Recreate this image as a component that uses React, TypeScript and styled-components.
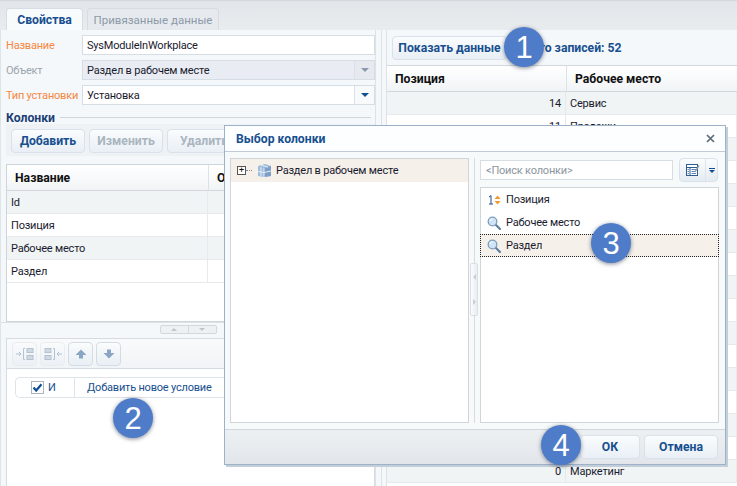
import React, { FC } from 'react'
import styled, { createGlobalStyle } from 'styled-components'

const GlobalStyle = createGlobalStyle`
    html, body {
        margin: 0;
        padding: 0;
        background: #fff;
    }
    body {
        font-family: Roboto, "Noto Sans", sans-serif;
        font-size: 11px;
        letter-spacing: -0.2px;
        color: #1a1a2e;
    }
`

const Page = styled.div`
    position: relative;
    width: 737px;
    height: 486px;
    overflow: hidden;
    background: #f5f8fa;
`

const TabStrip = styled.div`
    display: flex;
    align-items: flex-end;
    gap: 4px;
    height: 29px;
    padding-left: 6px;
    border-top: 1px solid #d3d8dd;
    background: linear-gradient(#e2e5e9, #e9ecef);
`

const Tab = styled.div<{ $active?: boolean }>`
    display: flex;
    align-items: center;
    justify-content: center;
    height: 22px;
    width: ${p => (p.$active ? 77 : 132)}px;
    box-sizing: border-box;
    border: 1px solid #d6dce2;
    border-bottom: 0;
    border-radius: 4px 4px 0 0;
    background: ${p => (p.$active ? '#f8fbfc' : '#e6eaee')};
    color: ${p => (p.$active ? '#174f8f' : '#8c99a8')};
    font-weight: ${p => (p.$active ? 700 : 400)};
    font-size: ${p => (p.$active ? 12.2 : 11.5)}px;
    letter-spacing: 0;
`

const Columns = styled.div`
    display: flex;
    height: 456px;
`

const LeftSide = styled.div`
    width: 376px;
    box-sizing: border-box;
    padding: 5px 0 0 5px;
    border-left: 1px solid #dfe4e8;
    border-right: 1px solid #dde2e6;
    display: flex;
    flex-direction: column;
`

const FormRow = styled.div`
    display: flex;
    align-items: center;
    height: 20px;
    margin-bottom: 5px;
`

const FormLabel = styled.div<{ $muted?: boolean }>`
    width: 76px;
    flex: none;
    white-space: nowrap;
    color: ${p => (p.$muted ? '#9aa5ae' : '#f6863f')};
`

const Field = styled.div<{ $disabled?: boolean }>`
    display: flex;
    align-items: center;
    justify-content: space-between;
    width: 293px;
    height: 20px;
    box-sizing: border-box;
    padding-left: 4px;
    border: 1px solid #d5dde5;
    background: ${p => (p.$disabled ? '#e9edf3' : '#fff')};
    color: #1a1a2e;
`

const FieldArrow = styled.div<{ $disabled?: boolean }>`
    display: flex;
    align-items: center;
    justify-content: center;
    width: 19px;
    height: 18px;
    border-left: 1px solid #dbe1e7;
    background: ${p => (p.$disabled ? '#e6eaef' : '#f7f9fb')};
    color: ${p => (p.$disabled ? '#8a9aac' : '#104f96')};
`

const Arrow = styled.div`
    width: 0;
    height: 0;
    border-left: 4px solid transparent;
    border-right: 4px solid transparent;
    border-top: 4px solid currentColor;
`

const SectionHead = styled.div`
    display: flex;
    align-items: center;
    gap: 5px;
    height: 13px;
    margin-top: 1px;
    color: #1c4076;
    font-size: 12.2px;
    font-weight: 700;
    letter-spacing: 0;
    &::after {
        content: '';
        flex: 1;
        margin-right: 4px;
        height: 1px;
        background: #cfd6dc;
    }
`

const ButtonBar = styled.div`
    display: flex;
    gap: 4px;
    height: 32px;
    box-sizing: border-box;
    padding: 5px 5px 3px;
    width: 369px;
    background: #eef2f5;
`

const Button = styled.div<{ $disabled?: boolean; $w?: number }>`
    display: flex;
    align-items: center;
    justify-content: center;
    width: ${p => p.$w ?? 74}px;
    height: 24px;
    flex: none;
    box-sizing: border-box;
    border: 1px solid #d9e2ea;
    border-radius: 4px;
    background: linear-gradient(#fafcfd, #e9eff5);
    color: ${p => (p.$disabled ? '#aab5c0' : '#174f8f')};
    font-size: 12.2px;
    font-weight: 700;
    letter-spacing: 0;
    white-space: nowrap;
`

const GridFrame = styled.div`
    width: 369px;
    height: 158px;
    margin-top: 8px;
    box-sizing: border-box;
    border: 1px solid #cdd5db;
    background: #fff;
    overflow: hidden;
`

const HeadRow = styled.div`
    display: flex;
    height: 25px;
    border-bottom: 1px solid #d2d8dd;
    background: linear-gradient(#fff, #f1f4f6);
    color: #111;
    font-size: 12.2px;
    font-weight: 700;
    letter-spacing: 0;
`

const HeadCell = styled.div<{ $w: number }>`
    display: flex;
    align-items: center;
    width: ${p => p.$w}px;
    flex: none;
    box-sizing: border-box;
    padding-left: 8px;
    white-space: nowrap;
    & + & {
        border-left: 1px solid #dde2e6;
    }
`

const DataRow = styled.div<{ $shaded?: boolean }>`
    display: flex;
    align-items: center;
    height: 22px;
    border-bottom: 1px solid #e7eaec;
    background: ${p => (p.$shaded ? '#f0f4f5' : '#fff')};
`

const DataCell = styled.div<{ $w: number; $right?: boolean }>`
    width: ${p => p.$w}px;
    flex: none;
    height: 100%;
    display: flex;
    align-items: center;
    box-sizing: border-box;
    padding: 1px 4px 0;
    white-space: nowrap;
    justify-content: ${p => (p.$right ? 'flex-end' : 'flex-start')};
    border-right: 1px solid #e7eaec;
`

const HSplit = styled.div`
    display: flex;
    justify-content: center;
    align-items: center;
    width: 369px;
    height: 16px;
    margin-left: -5px;
    padding-left: 5px;
    border-top: 1px solid #dde2e6;
    box-sizing: border-box;
`

const SplitButtons = styled.div`
    display: flex;
    margin-top: -3px;
    border: 1px solid #d2d8dd;
    border-radius: 2px;
    color: #bcc5cd;
    background: #eef1f4;
    & > div {
        display: flex;
        align-items: center;
        justify-content: center;
        width: 27px;
        height: 7px;
    }
    & > div + div {
        border-left: 1px solid #d2d8dd;
    }
`

const SmallUp = styled.div`
    &::before {
        content: '';
        border-left: 3px solid transparent;
        border-right: 3px solid transparent;
        border-bottom: 3px solid currentColor;
    }
`

const SmallDown = styled.div`
    &::before {
        content: '';
        border-left: 3px solid transparent;
        border-right: 3px solid transparent;
        border-top: 3px solid currentColor;
    }
`

const FilterPanel = styled.div`
    flex: 1;
    width: 369px;
    box-sizing: border-box;
    border: 1px solid #d5dbe0;
    border-bottom: 0;
    background: #fff;
`

const FilterBar = styled.div`
    display: flex;
    gap: 3px;
    height: 30px;
    box-sizing: border-box;
    padding: 3px 5px;
    border-bottom: 1px solid #d5dbe0;
    background: linear-gradient(#f9fafb, #f1f4f6);
`

const IconButton = styled.div<{ $disabled?: boolean }>`
    display: flex;
    align-items: center;
    justify-content: center;
    width: 25px;
    height: 24px;
    box-sizing: border-box;
    border: 1px solid ${p => (p.$disabled ? '#e2e7ec' : '#d3dce5')};
    border-radius: 4px;
    background: linear-gradient(#fafcfd, #e9eff5);
    opacity: ${p => (p.$disabled ? 0.6 : 1)};
`

const ConditionRow = styled.div`
    display: flex;
    align-items: center;
    height: 21px;
    box-sizing: border-box;
    margin: 8px 0 0 8px;
    border: 1px solid #dfe4e8;
    border-right: 0;
    border-radius: 5px 0 0 5px;
`

const GroupCell = styled.div`
    display: flex;
    align-items: center;
    gap: 4px;
    width: 59px;
    height: 100%;
    box-sizing: border-box;
    padding-left: 15px;
    border-right: 1px solid #dfe4e8;
    color: #174f8f;
`

const CheckBox = styled.div`
    display: flex;
    align-items: center;
    justify-content: center;
    width: 13px;
    height: 13px;
    box-sizing: border-box;
    border: 1px solid #a9b4c0;
    background: #fff;
`

const AddLink = styled.div`
    padding-left: 12px;
    color: #174f8f;
    white-space: nowrap;
`

const VSplit = styled.div`
    width: 11px;
    flex: none;
    position: relative;
    background: linear-gradient(
        to right,
        #f5f8fa 5px,
        #dde2e6 5px,
        #dde2e6 6px,
        #f5f8fa 6px
    );
    border-right: 1px solid #dde2e6;
    box-sizing: border-box;
`

const RightSide = styled.div`
    flex: 1;
    display: flex;
    flex-direction: column;
    min-width: 0;
`

const RightTools = styled.div`
    display: flex;
    align-items: center;
    gap: 12px;
    height: 35px;
    flex: none;
    box-sizing: border-box;
    padding: 0 5px;
    color: #174f8f;
    font-size: 12.2px;
    font-weight: 700;
    letter-spacing: 0;
    white-space: nowrap;
`

const RightGrid = styled.div`
    border-top: 1px solid #d2d8dd;
    background: #fff;
    flex: 1;
    overflow: hidden;
`

const Dialog = styled.div`
    position: absolute;
    left: 224px;
    top: 125px;
    width: 502px;
    height: 340px;
    box-sizing: border-box;
    border: 1px solid #9db1c9;
    box-shadow: 2px 2px 0 #c3ced9;
    background: #f6fafb;
    display: flex;
    flex-direction: column;
`

const DialogHead = styled.div`
    display: flex;
    align-items: center;
    justify-content: space-between;
    height: 25px;
    flex: none;
    padding: 0 10px 0 11px;
    border-bottom: 1px solid #bfccd8;
    background: #fdfeff;
    color: #174f8f;
    font-size: 12.2px;
    font-weight: 700;
    letter-spacing: 0;
`

const DialogBody = styled.div`
    flex: 1;
    display: flex;
    padding: 6px 6px 6px 5px;
    min-height: 0;
`

const TreePane = styled.div`
    width: 239px;
    flex: none;
    box-sizing: border-box;
    border: 1px solid #cfd5d9;
    background: #fff;
`

const TreeRow = styled.div`
    display: flex;
    align-items: center;
    height: 23px;
    padding-left: 6px;
    background: #f5f0ea;
`

const TreeToggle = styled.div`
    display: flex;
    align-items: center;
    justify-content: center;
    width: 9px;
    height: 9px;
    box-sizing: border-box;
    border: 1px solid #555;
    background: #fff;
    font-size: 9px;
    line-height: 1;
    color: #111;
`

const TreeDots = styled.div`
    width: 6px;
    margin: 0 5px 0 0;
    border-top: 1px dotted #888;
`

const TreeLabel = styled.div`
    margin-left: 4px;
    white-space: nowrap;
`

const PaneSplit = styled.div`
    width: 11px;
    flex: none;
    position: relative;
    background: linear-gradient(
        to right,
        transparent 5px,
        #d6dcdf 5px,
        #d6dcdf 6px,
        transparent 6px
    );
`

const PaneGrip = styled.div`
    position: absolute;
    left: 1px;
    top: 105px;
    width: 8px;
    height: 53px;
    box-sizing: border-box;
    border: 1px solid #d9dfe4;
    border-radius: 2px;
    background: linear-gradient(to right, #fbfcfd, #e9edf0);
    color: #c8ced3;
    display: flex;
    flex-direction: column;
    justify-content: space-around;
    align-items: center;
`

const GripTriangle = styled.div<{ $right?: boolean }>`
    width: 0;
    height: 0;
    border-top: 3px solid transparent;
    border-bottom: 3px solid transparent;
    ${p =>
        p.$right
            ? 'border-left: 3px solid currentColor;'
            : 'border-right: 3px solid currentColor;'}
`

const ColumnPane = styled.div`
    flex: 1;
    display: flex;
    flex-direction: column;
    min-width: 0;
`

const SearchRow = styled.div`
    display: flex;
    align-items: center;
    justify-content: space-between;
    height: 24px;
    margin-bottom: 5px;
    flex: none;
    padding-right: 1px;
`

const SearchInput = styled.div`
    width: 193px;
    height: 20px;
    box-sizing: border-box;
    padding-left: 5px;
    display: flex;
    align-items: center;
    border: 1px solid #d6dde3;
    background: #fff;
    color: #8c96a0;
`

const ViewButton = styled.div`
    display: flex;
    align-items: center;
    width: 39px;
    height: 24px;
    box-sizing: border-box;
    border: 1px solid #d9e2ea;
    border-radius: 4px;
    background: linear-gradient(#fafcfd, #e4ebf2);
    color: #104f96;
`

const ViewIcon = styled.div`
    display: flex;
    align-items: center;
    justify-content: center;
    width: 25px;
    height: 100%;
    border-right: 1px solid #dde4ea;
`

const ViewArrow = styled.div`
    flex: 1;
    display: flex;
    justify-content: center;
`

const TinyArrow = styled.div`
    width: 6px;
    border-top: 1px solid currentColor;
    padding-top: 1px;
    &::after {
        content: '';
        display: block;
        width: 0;
        height: 0;
        border-left: 3px solid transparent;
        border-right: 3px solid transparent;
        border-top: 3px solid currentColor;
    }
`

const ColumnList = styled.div`
    flex: 1;
    box-sizing: border-box;
    border: 1px solid #cfd5d9;
    background: #fff;
`

const ColumnRow = styled.div<{ $selected?: boolean }>`
    display: flex;
    align-items: center;
    gap: 5px;
    height: 23px;
    box-sizing: border-box;
    padding-left: 6px;
    ${p =>
        p.$selected
            ? 'background: #f5f0ea; border: 1px dotted #222; margin: 0 -1px; padding-left: 6px;'
            : ''}
`

const DialogFoot = styled.div`
    display: flex;
    justify-content: flex-end;
    align-items: center;
    gap: 4px;
    height: 35px;
    flex: none;
    box-sizing: border-box;
    padding: 0 7px 1px 0;
    border-top: 1px solid #cfd5d9;
    background: linear-gradient(#edf0f2, #e2e6eb);
`

const Badge = styled.div<{ $x: number; $y: number }>`
    position: absolute;
    left: ${p => p.$x - 20}px;
    top: ${p => p.$y - 20}px;
    width: 40px;
    height: 40px;
    border-radius: 50%;
    background: #4f7cc8;
    box-shadow: 0 1px 4px rgba(50, 60, 80, 0.6);
    color: #fff;
    display: flex;
    align-items: center;
    justify-content: center;
    font-family: "Liberation Sans", sans-serif;
    font-size: 31px;
    letter-spacing: 0;
    line-height: 1;
`

const Cube: FC = () => (
    <svg width="15" height="15" viewBox="0 0 15 15">
        <path d="M1 3 L8 1 L14 3 L14 13 L7 14 L1 13 Z" fill="#9fbcdc" />
        <path d="M7 5 L14 3 V13 L7 14 Z" fill="#7b9fc8" />
        <path d="M1 8.5 L7 9.5 L14 8 M4 2.2 L11 4.2 M7 5 V14 M4 4.4 V13" stroke="#e4edf6" fill="none" />
    </svg>
)

const Magnifier: FC = () => (
    <svg width="14" height="14" viewBox="0 0 14 14">
        <path d="M8 8 L13 13" stroke="#5f7f9f" strokeWidth="2.2" strokeLinecap="round" />
        <circle cx="5.5" cy="5.5" r="4.3" fill="#cfe4f6" stroke="#7e9dbb" strokeWidth="1.3" />
        <path d="M3 5 Q3.6 3 5.6 2.8" stroke="#fff" fill="none" />
    </svg>
)

const NumberIcon: FC = () => (
    <svg width="14" height="14" viewBox="0 0 14 14">
        <path d="M2 4 L4 2.6 V11 M2 11 H6" stroke="#1c4f92" fill="none" />
        <path d="M7.5 6 L10.5 2.5 L13.5 6 Z M7.5 8 H13.5 L10.5 11.5 Z" fill="#f59a2c" />
    </svg>
)

const BlockArrow: FC<{ down?: boolean }> = ({ down }) => (
    <svg width="12" height="10" viewBox="0 0 12 10">
        <path
            d={down ? 'M4 0.5 H8 V4 H11.5 L6 9.5 L0.5 4 H4 Z' : 'M4 9.5 H8 V6 H11.5 L6 0.5 L0.5 6 H4 Z'}
            fill="#8ba6c4"
        />
    </svg>
)

const IndentIcon: FC<{ flip?: boolean }> = ({ flip }) => (
    <svg width="20" height="14" viewBox="0 0 20 14">
        <g transform={flip ? 'translate(20 0) scale(-1 1)' : undefined} fill="none" stroke="#8ba0b5">
            <path d="M1 7 H6 M4 5 L6 7 L4 9" />
            <path d="M10 1.5 H8.5 V12.5 H10" />
            <rect x="12" y="1.5" width="6" height="4" fill="#b5c6d6" />
            <rect x="12" y="8.5" width="6" height="4" fill="#b5c6d6" />
        </g>
    </svg>
)

const ViewGlyph: FC = () => (
    <svg width="14" height="13" viewBox="0 0 14 13">
        <rect x="0.5" y="0.5" width="11" height="11" fill="#fff" stroke="#2f5c8f" />
        <path d="M0.5 3.5 H11.5 M4 3.5 V11.5" stroke="#2f5c8f" />
        <path d="M5.5 5.5 H10 M5.5 7.5 H10 M5.5 9.5 H10 M1.5 5.5 H3 M1.5 7.5 H3 M1.5 9.5 H3" stroke="#5f86b0" />
        <path d="M9 8 L13 1.5" stroke="#8a99a8" strokeWidth="1.4" />
    </svg>
)

const CloseGlyph: FC = () => (
    <svg width="9" height="9" viewBox="0 0 9 9">
        <path d="M1 1 L8 8 M8 1 L1 8" stroke="#5d6b78" strokeWidth="1.7" />
    </svg>
)

const CheckGlyph: FC = () => (
    <svg width="11" height="11" viewBox="0 0 11 11">
        <path d="M1.5 5.5 L4.2 8.5 L9.5 2.2" stroke="#104f96" strokeWidth="2.2" fill="none" />
    </svg>
)

const leftRows = ['Id', 'Позиция', 'Рабочее место', 'Раздел']

const rightRows: [number, string][] = [
    [14, 'Сервис'],
    [11, 'Продажи'],
    [10, 'Продажи'],
    [9, 'Продажи'],
    [8, 'Продажи'],
    [7, 'Продажи'],
    [6, 'Продажи'],
    [5, 'Продажи'],
    [4, 'Маркетинг'],
    [3, 'Маркетинг'],
    [2, 'Маркетинг'],
    [1, 'Маркетинг'],
    [0, 'Сервис'],
    [3, 'Сервис'],
    [2, 'Сервис'],
    [1, 'Сервис'],
    [0, 'Маркетинг'],
]

const App: FC = () => {
    return (
        <Page>
            <GlobalStyle />
            <TabStrip>
                <Tab $active>Свойства</Tab>
                <Tab>Привязанные данные</Tab>
            </TabStrip>
            <Columns>
                <LeftSide>
                    <FormRow>
                        <FormLabel>Название</FormLabel>
                        <Field>SysModuleInWorkplace</Field>
                    </FormRow>
                    <FormRow>
                        <FormLabel $muted>Объект</FormLabel>
                        <Field $disabled>
                            Раздел в рабочем месте
                            <FieldArrow $disabled>
                                <Arrow />
                            </FieldArrow>
                        </Field>
                    </FormRow>
                    <FormRow>
                        <FormLabel>Тип установки</FormLabel>
                        <Field>
                            Установка
                            <FieldArrow>
                                <Arrow />
                            </FieldArrow>
                        </Field>
                    </FormRow>
                    <SectionHead>Колонки</SectionHead>
                    <ButtonBar>
                        <Button>Добавить</Button>
                        <Button $disabled>Изменить</Button>
                        <Button $disabled>Удалить</Button>
                    </ButtonBar>
                    <GridFrame>
                        <HeadRow>
                            <HeadCell $w={201}>Название</HeadCell>
                            <HeadCell $w={166}>Обязательная</HeadCell>
                        </HeadRow>
                        {leftRows.map((name, i) => (
                            <DataRow key={name} $shaded={i % 2 === 0}>
                                <DataCell $w={201}>{name}</DataCell>
                            </DataRow>
                        ))}
                    </GridFrame>
                    <HSplit>
                        <SplitButtons>
                            <SmallUp />
                            <SmallDown />
                        </SplitButtons>
                    </HSplit>
                    <FilterPanel>
                        <FilterBar>
                            <IconButton $disabled>
                                <IndentIcon />
                            </IconButton>
                            <IconButton $disabled>
                                <IndentIcon flip />
                            </IconButton>
                            <IconButton>
                                <BlockArrow />
                            </IconButton>
                            <IconButton>
                                <BlockArrow down />
                            </IconButton>
                        </FilterBar>
                        <ConditionRow>
                            <GroupCell>
                                <CheckBox>
                                    <CheckGlyph />
                                </CheckBox>
                                И
                            </GroupCell>
                            <AddLink>Добавить новое условие</AddLink>
                        </ConditionRow>
                    </FilterPanel>
                </LeftSide>
                <VSplit />
                <RightSide>
                    <RightTools>
                        <Button $w={115}>Показать данные</Button>
                        Всего записей: 52
                    </RightTools>
                    <RightGrid>
                        <HeadRow>
                            <HeadCell $w={179}>Позиция</HeadCell>
                            <HeadCell $w={171}>Рабочее место</HeadCell>
                        </HeadRow>
                        {rightRows.map(([pos, place], i) => (
                            <DataRow key={i} $shaded={i % 2 === 0}>
                                <DataCell $w={179} $right>
                                    {pos}
                                </DataCell>
                                <DataCell $w={171}>{place}</DataCell>
                            </DataRow>
                        ))}
                    </RightGrid>
                </RightSide>
            </Columns>
            <Dialog>
                <DialogHead>
                    Выбор колонки
                    <CloseGlyph />
                </DialogHead>
                <DialogBody>
                    <TreePane>
                        <TreeRow>
                            <TreeToggle>+</TreeToggle>
                            <TreeDots />
                            <Cube />
                            <TreeLabel>Раздел в рабочем месте</TreeLabel>
                        </TreeRow>
                    </TreePane>
                    <PaneSplit>
                        <PaneGrip>
                            <GripTriangle />
                            <GripTriangle $right />
                        </PaneGrip>
                    </PaneSplit>
                    <ColumnPane>
                        <SearchRow>
                            <SearchInput>&lt;Поиск колонки&gt;</SearchInput>
                            <ViewButton>
                                <ViewIcon>
                                    <ViewGlyph />
                                </ViewIcon>
                                <ViewArrow>
                                    <TinyArrow />
                                </ViewArrow>
                            </ViewButton>
                        </SearchRow>
                        <ColumnList>
                            <ColumnRow>
                                <NumberIcon />
                                Позиция
                            </ColumnRow>
                            <ColumnRow>
                                <Magnifier />
                                Рабочее место
                            </ColumnRow>
                            <ColumnRow $selected>
                                <Magnifier />
                                Раздел
                            </ColumnRow>
                        </ColumnList>
                    </ColumnPane>
                </DialogBody>
                <DialogFoot>
                    <Button $w={60}>ОК</Button>
                    <Button>Отмена</Button>
                </DialogFoot>
            </Dialog>
            <Badge $x={524} $y={47}>1</Badge>
            <Badge $x={133} $y={418}>2</Badge>
            <Badge $x={611} $y={243}>3</Badge>
            <Badge $x={561} $y={445}>4</Badge>
        </Page>
    )
}

export default App
